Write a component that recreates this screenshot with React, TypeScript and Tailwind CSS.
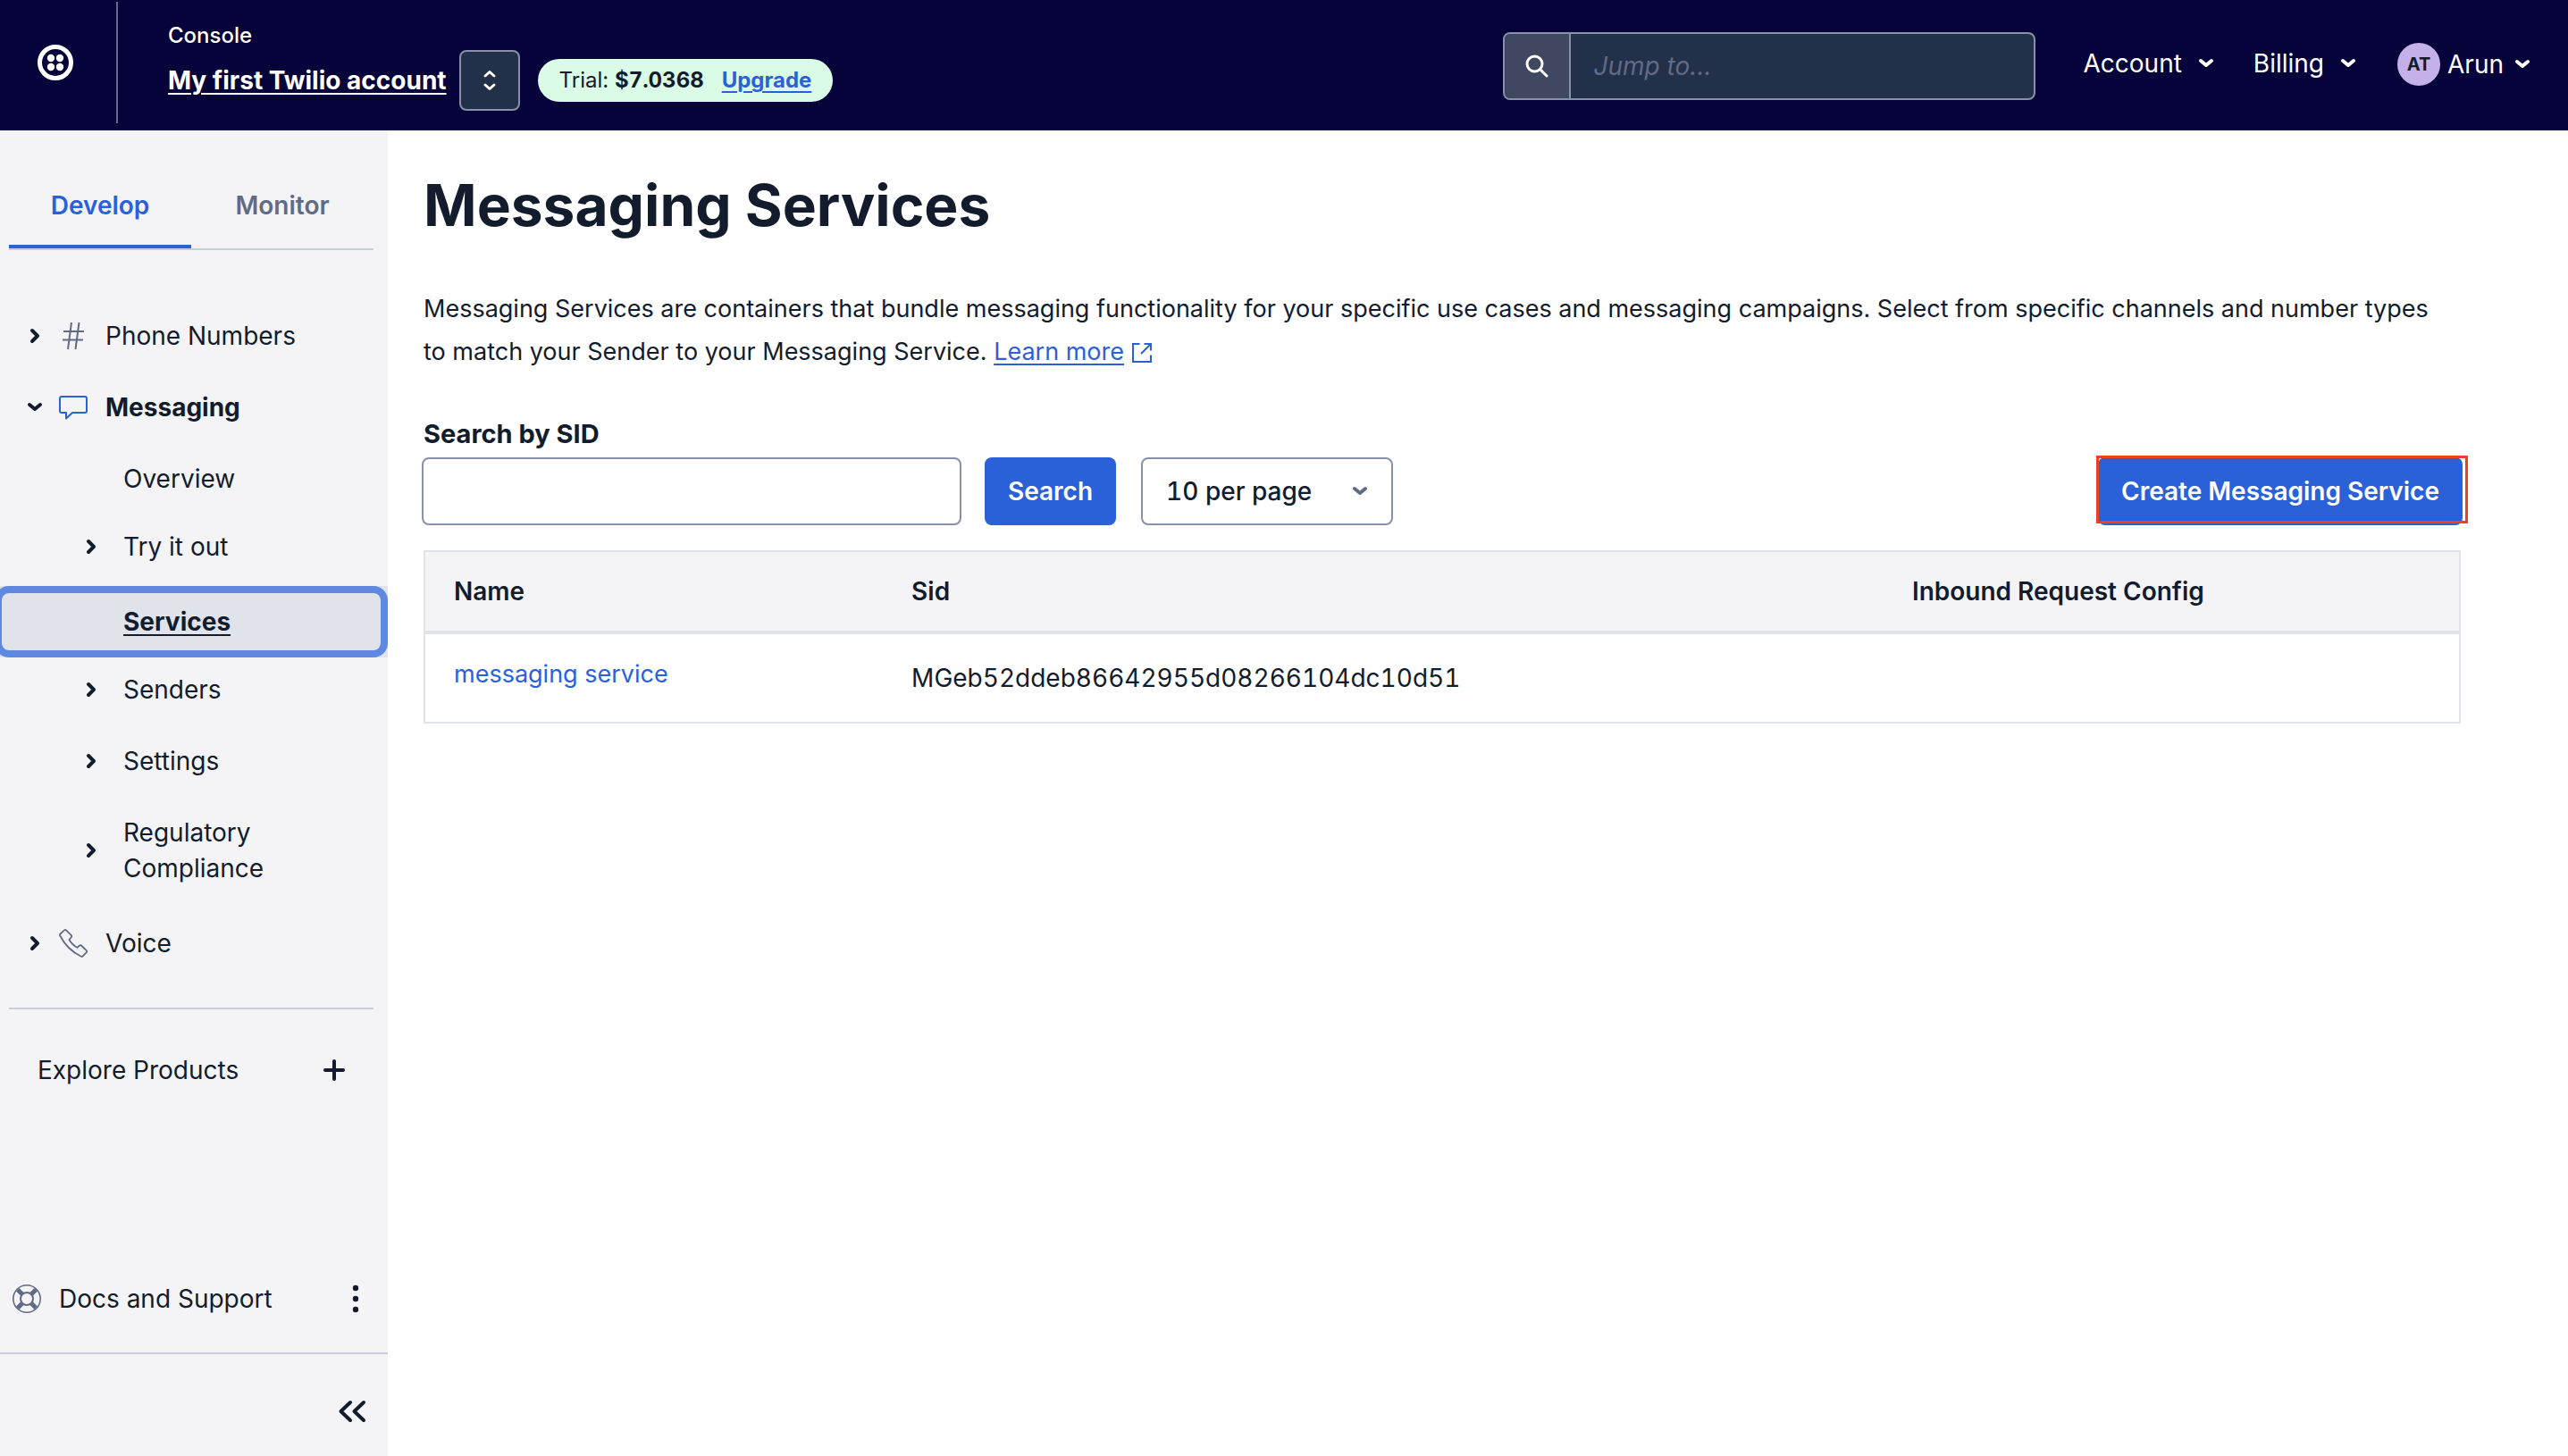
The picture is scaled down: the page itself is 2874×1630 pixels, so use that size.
import type { ReactNode, SVGProps } from "react";

type IconProps = SVGProps<SVGSVGElement>;

function ChevronRight(props: IconProps) {
  return (
    <svg viewBox="0 0 12 18" width="12" height="18" fill="none" stroke="currentColor" strokeWidth="4" strokeLinecap="round" strokeLinejoin="round" aria-hidden="true" {...props}>
      <path d="M3 3 L9 9 L3 15" />
    </svg>
  );
}

function ChevronDown(props: IconProps) {
  return (
    <svg viewBox="0 0 18 12" width="18" height="12" fill="none" stroke="currentColor" strokeWidth="4" strokeLinecap="round" strokeLinejoin="round" aria-hidden="true" {...props}>
      <path d="M3 3 L9 8 L15 3" />
    </svg>
  );
}

function TwilioLogo() {
  return (
    <svg viewBox="0 0 40 40" width="40" height="40" fill="currentColor" aria-hidden="true">
      <circle cx="20" cy="20" r="17.5" fill="none" stroke="currentColor" strokeWidth="5" />
      <circle cx="15" cy="15" r="4.2" />
      <circle cx="25" cy="15" r="4.2" />
      <circle cx="15" cy="25" r="4.2" />
      <circle cx="25" cy="25" r="4.2" />
    </svg>
  );
}

function HashIcon() {
  return (
    <svg viewBox="0 0 32 32" width="32" height="32" fill="none" stroke="#606b85" strokeWidth="2" aria-hidden="true">
      <path d="M5 11H28M4 20.500H27M14 1L10 31M22.500 1L18.500 31" />
    </svg>
  );
}

function MessageIcon() {
  return (
    <svg viewBox="0 0 32 32" width="32" height="32" fill="none" stroke="#2a61d8" strokeWidth="2" strokeLinejoin="round" aria-hidden="true">
      <path d="M3 4H29a2 2 0 0 1 2 2V20a2 2 0 0 1 -2 2H15L8 28.500V22H3a2 2 0 0 1 -2 -2V6a2 2 0 0 1 2 -2Z" />
    </svg>
  );
}

function PhoneIcon() {
  return (
    <svg viewBox="0 0 32 32" width="32" height="32" fill="none" stroke="#606b85" strokeWidth="1.800" strokeLinejoin="round" aria-hidden="true">
      <path d="M1.500 5.500L6 1.400a1.400 1.400 0 0 1 2 0L13.800 7.200a1.400 1.400 0 0 1 0 2L11.500 12C13.500 15.500 17 19 20.500 20.800L23 18.500a1.400 1.400 0 0 1 2 0L30.800 24.200a1.400 1.400 0 0 1 0 2L26.500 30.600a1.400 1.400 0 0 1 -1.600 .2C15 26 6 17 1.200 7.500a1.600 1.600 0 0 1 .3 -2Z" />
    </svg>
  );
}

function LifeRingIcon() {
  return (
    <svg viewBox="0 0 32 32" width="32" height="32" fill="none" stroke="#606b85" aria-hidden="true">
      <circle cx="16" cy="16" r="15.200" strokeWidth="1.600" />
      <circle cx="16" cy="16" r="7" strokeWidth="2" />
      <path d="M5.800 5.800L11 11M26.200 5.800L21 11M5.800 26.200L11 21M26.200 26.200L21 21" strokeWidth="5" />
    </svg>
  );
}

function ExternalIcon() {
  return (
    <svg viewBox="0 0 24 24" width="24" height="24" fill="none" stroke="currentColor" strokeWidth="2" className="ml-2 inline-block align-[-4px]" aria-hidden="true">
      <path d="M9.500 2H2V22H22V14.500M14.500 2H22V9.500M22 2L11 13" />
    </svg>
  );
}

function GroupRow({ icon, label, open = false }: { icon: ReactNode; label: string; open?: boolean }) {
  return (
    <button type="button" aria-expanded={open} className="flex h-20 w-full items-center text-left">
      <span className="ml-7 flex w-[22px] justify-center">{open ? <ChevronDown /> : <ChevronRight />}</span>
      <span className="ml-4 w-8">{icon}</span>
      <span className={open ? "ml-5 font-bold" : "ml-5"}>{label}</span>
    </button>
  );
}

function SubRow({ label }: { label: string }) {
  return (
    <button type="button" aria-expanded={false} className="flex w-full items-center py-5 text-left">
      <span className="ml-24 w-[42px]">
        <ChevronRight />
      </span>
      <span className="w-50">{label}</span>
    </button>
  );
}

function Sidebar() {
  return (
    <aside className="flex w-[434px] shrink-0 flex-col bg-[#f4f4f6]">
      <div role="tablist" className="mr-4 ml-2.5 flex h-[134px] border-b-2 border-[#cacdd8] font-semibold">
        <button type="button" role="tab" aria-selected="true" className="flex-1 border-b-4 border-[#2a61d8] pt-10 text-[#2a61d8]">
          Develop
        </button>
        <button type="button" role="tab" aria-selected="false" className="flex-1 border-b-4 border-transparent pt-10 text-[#606b85]">
          Monitor
        </button>
      </div>
      <nav aria-label="Products" className="pt-14 leading-10">
        <GroupRow icon={<HashIcon />} label="Phone Numbers" />
        <GroupRow icon={<MessageIcon />} label="Messaging" open />
        <a href="#overview" className="mt-1 flex h-18 items-center pl-[138px]">
          Overview
        </a>
        <SubRow label="Try it out" />
        <a href="#services" aria-current="page" className="mt-1 -mb-1 block bg-[#e1e3ea] underline decoration-2 underline-offset-4">
          <span className="-ml-1.5 flex h-20 items-center rounded-2xl border-8 border-[#5f88e0] pl-[136px] font-bold">Services</span>
        </a>
        <SubRow label="Senders" />
        <SubRow label="Settings" />
        <SubRow label="Regulatory Compliance" />
        <div className="pt-1">
          <GroupRow icon={<PhoneIcon />} label="Voice" />
        </div>
      </nav>
      <div className="mt-8 mr-4 ml-2.5 border-t-2 border-[#cacdd8]">
        <button type="button" className="mt-12 flex h-10 w-full items-center justify-between pr-8 pl-8">
          Explore Products
          <svg viewBox="0 0 24 24" width="24" height="24" stroke="currentColor" strokeWidth="4" strokeLinecap="round" aria-hidden="true">
            <path d="M2 12H22M12 2V22" />
          </svg>
        </button>
      </div>
      <div className="mt-auto flex h-[122px] items-center border-b-2 border-[#cacdd8] pr-8 pl-3.5">
        <LifeRingIcon />
        <a href="#docs" className="ml-5">
          Docs and Support
        </a>
        <button type="button" aria-label="More options" className="ml-auto">
          <svg viewBox="0 0 8 32" width="8" height="32" fill="currentColor" aria-hidden="true">
            <circle cx="4" cy="4" r="3.200" />
            <circle cx="4" cy="16" r="3.200" />
            <circle cx="4" cy="28" r="3.200" />
          </svg>
        </button>
      </div>
      <div className="flex justify-end pt-[50px] pr-6 pb-[36px]">
        <button type="button" aria-label="Collapse sidebar">
          <svg viewBox="0 0 32 28" width="32" height="28" fill="none" stroke="currentColor" strokeWidth="4" strokeLinecap="round" strokeLinejoin="round" aria-hidden="true">
            <path d="M14 4L3.500 14L14 24M29 4L18.500 14L29 24" />
          </svg>
        </button>
      </div>
    </aside>
  );
}

function Header() {
  return (
    <header className="flex h-[146px] bg-[#06033a] text-white">
      <div className="mt-0.5 flex h-[136px] w-33 shrink-0 items-center border-r-2 border-[#606b85] pl-[42px]">
        <TwilioLogo />
      </div>
      <div className="ml-14 pt-6">
        <div className="text-2xl leading-8 font-medium">Console</div>
        <div className="flex h-17 items-center">
          <a href="#account" className="font-bold underline decoration-2 underline-offset-4">
            My first Twilio account
          </a>
          <button type="button" aria-label="Switch account" className="ml-3.5 flex h-17 w-17 items-center justify-center rounded-lg border-2 border-[#8891aa] bg-[#233049]">
            <svg viewBox="0 0 16 24" width="16" height="24" fill="none" stroke="currentColor" strokeWidth="3" strokeLinecap="round" strokeLinejoin="round" aria-hidden="true">
              <path d="M3 7L8 2.500L13 7M3 17L8 21.500L13 17" />
            </svg>
          </button>
          <div className="ml-5 flex h-12 items-center rounded-full bg-[#dafbe5] px-6 text-2xl whitespace-pre text-[#121c2d]">
            Trial: <strong className="font-bold tabular-nums">$7.0368</strong>
            <a href="#upgrade" className="ml-5 font-bold text-[#2a61d8] underline decoration-2 underline-offset-4">
              Upgrade
            </a>
          </div>
        </div>
      </div>
      <div className="ml-auto flex pt-9 pr-[42px]">
        <label className="flex h-19 w-149 overflow-hidden rounded-lg border-2 border-[#8891aa] bg-[#233049]">
          <span className="flex w-[74px] items-center justify-center border-r-2 border-[#8891aa] bg-[#3f4860]">
            <svg viewBox="0 0 26 26" width="26" height="26" fill="none" stroke="currentColor" strokeWidth="3" strokeLinecap="round" aria-hidden="true">
              <circle cx="10.500" cy="10.500" r="8.500" />
              <path d="M17 17L24 24" />
            </svg>
          </span>
          <input type="search" aria-label="Jump to" placeholder="Jump to..." className="w-full min-w-0 flex-1 bg-transparent pl-6.5 placeholder:text-[#606b85] placeholder:italic" />
        </label>
        <button type="button" className="ml-[54px] flex h-[69px] items-center gap-[18px]">
          Account <ChevronDown />
        </button>
        <button type="button" className="ml-11 flex h-[69px] items-center gap-[18px]">
          Billing <ChevronDown />
        </button>
        <button type="button" className="ml-[46px] flex h-18 items-center">
          <span className="flex size-12 items-center justify-center rounded-full bg-[#c4b1ea] text-xl font-bold text-[#121c2d]">AT</span>
          <span className="mr-3 ml-2">Arun</span>
          <ChevronDown />
        </button>
      </div>
    </header>
  );
}

function Toolbar() {
  return (
    <div className="mt-12 flex items-end">
      <div className="-ml-0.5 flex flex-col">
        <label htmlFor="sid" className="ml-0.5 text-[29px] leading-10 font-bold">
          Search by SID
        </label>
        <input id="sid" type="text" className="mt-1.5 h-19 w-[604px] rounded-lg border-2 border-[#8891aa] px-6" />
      </div>
      <button type="button" className="ml-6.5 h-19 rounded-lg bg-[#2a61d8] px-6.5 font-semibold text-white">
        Search
      </button>
      <div className="relative ml-7">
        <select aria-label="Results per page" defaultValue="10" className="h-19 w-[282px] appearance-none rounded-lg border-2 border-[#8891aa] bg-white pl-6.5 font-medium tabular-nums">
          <option value="10">10 per page</option>
          <option value="20">20 per page</option>
          <option value="50">50 per page</option>
        </select>
        <ChevronDown className="pointer-events-none absolute top-8 right-7 text-[#606b85]" />
      </div>
      <div className="relative -mr-0.5 ml-auto">
        <button type="button" className="h-19 rounded-lg bg-[#2a61d8] px-6.5 font-semibold text-white">
          Create Messaging Service
        </button>
        <div className="pointer-events-none absolute -top-0.5 -right-1.5 bottom-0.5 -left-0.5 border-3 border-[#ee4023]" />
      </div>
    </div>
  );
}

function ServicesTable() {
  return (
    <table className="mt-7 w-full table-fixed border-separate border-spacing-0 border-2 border-[#e1e3ea] text-left">
      <colgroup>
        <col className="w-[22.500%]" />
        <col className="w-[49.200%]" />
        <col />
      </colgroup>
      <thead className="bg-[#f4f4f6]">
        <tr className="h-23">
          <th scope="col" className="border-b-4 border-[#e1e3ea] pl-8 font-semibold">Name</th>
          <th scope="col" className="border-b-4 border-[#e1e3ea] pl-8 font-semibold">Sid</th>
          <th scope="col" className="border-b-4 border-[#e1e3ea] pl-8 font-semibold">Inbound Request Config</th>
        </tr>
      </thead>
      <tbody>
        <tr className="h-[98px]">
          <td className="pb-2.5 pl-8">
            <a href="#messaging-service" className="text-[27px] text-[#2a61d8]">messaging service</a>
          </td>
          <td className="pl-8 tabular-nums">MGeb52ddeb86642955d08266104dc10d51</td>
          <td className="pl-8" />
        </tr>
      </tbody>
    </table>
  );
}

export default function App() {
  return (
    <div className="flex min-h-screen flex-col bg-white font-['Inter',sans-serif] text-[28px] leading-10 text-[#121c2d]">
      <Header />
      <div className="flex flex-1">
        <Sidebar />
        <main className="min-w-0 flex-1 pt-11 pr-30 pl-10">
          <h1 className="text-[64px] leading-20 font-bold">Messaging Services</h1>
          <p className="mt-13 pr-5 text-[27px] leading-12">
            Messaging Services are containers that bundle messaging functionality for your specific use cases and messaging campaigns. Select from specific channels and number types to match your Sender to your Messaging Service.{" "}
            <a href="#learn-more" className="text-[#2a61d8] underline decoration-2 underline-offset-4">
              Learn more
              <ExternalIcon />
            </a>
          </p>
          <Toolbar />
          <ServicesTable />
        </main>
      </div>
    </div>
  );
}
